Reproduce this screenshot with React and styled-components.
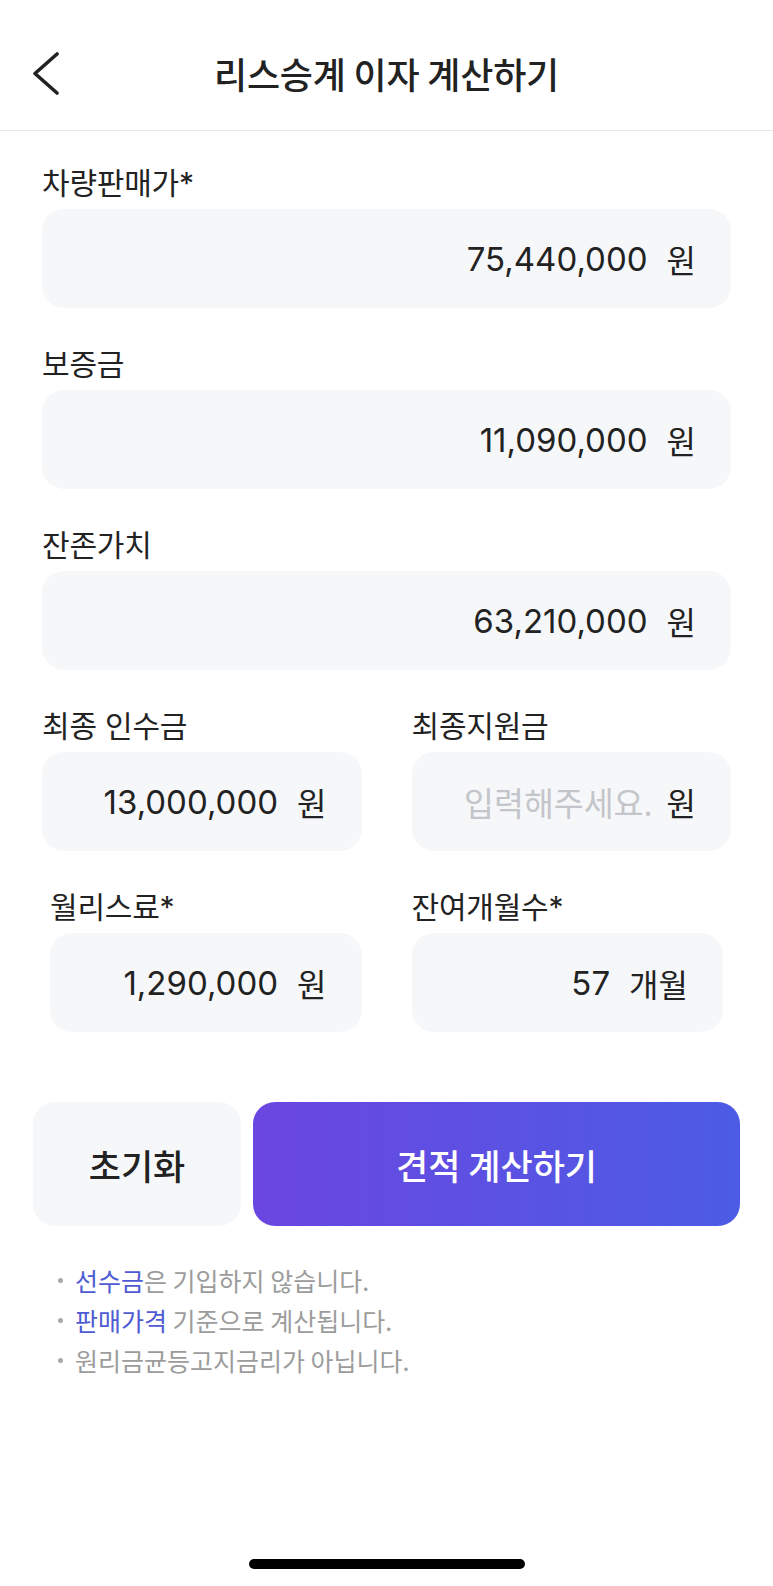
import React from "react";
import styled, { createGlobalStyle } from "styled-components";

const Global = createGlobalStyle`
  html, body { margin: 0; padding: 0; background: #fff; }
  body {
    font-family: Inter, "Noto Sans CJK KR", sans-serif;
    color: #222;
    -webkit-font-smoothing: antialiased;
  }
  * { box-sizing: border-box; }
`;

const Page = styled.div`
  width: 773px;
  min-height: 1586px;
  display: flex;
  flex-direction: column;
  background: #fff;
`;

const Header = styled.header`
  height: 131px;
  padding-top: 16px;
  display: grid;
  grid-template-columns: 1fr auto 1fr;
  align-items: center;
  border-bottom: 1px solid #e6e6e6;
`;

const BackButton = styled.button`
  justify-self: start;
  margin-left: 32px;
  padding: 0;
  border: 0;
  background: none;
  width: 28px;
  height: 43px;
  display: flex;
  cursor: pointer;
`;

const Title = styled.h1`
  margin: 0;
  font-family: "Noto Sans CJK KR", sans-serif;
  font-size: 36px;
  font-weight: 500;
  letter-spacing: -0.2px;
  color: #222;
`;

const Form = styled.div`
  padding: 34px 42px 0;
  display: flex;
  flex-direction: column;
  gap: 38px;
`;

const Row = styled.div`
  display: grid;
  grid-template-columns: 1fr 1fr;
  column-gap: 50px;
`;

const Field = styled.div`
  display: flex;
  flex-direction: column;
  gap: 8px;
  padding-left: ${(p) => (p.$inset === "left" ? "8px" : "0")};
  padding-right: ${(p) => (p.$inset === "right" ? "8px" : "0")};
`;

const Label = styled.label`
  font-family: Inter, "Noto Sans CJK KR", sans-serif;
  font-size: 30px;
  line-height: 36px;
  font-weight: 400;
  color: #222;
  letter-spacing: -0.2px;
`;

const Box = styled.div`
  height: 99px;
  border-radius: 22px;
  background: #f6f7f9;
  display: flex;
  align-items: center;
  justify-content: flex-end;
  padding-right: 35px;
  gap: 19px;
`;

const Value = styled.span`
  font-family: Inter, "Noto Sans CJK KR", sans-serif;
  font-size: 33px;
  font-weight: 400;
  color: #222;
`;

const Placeholder = styled.span`
  font-family: "Noto Sans CJK KR", sans-serif;
  font-size: 32.5px;
  color: #c3c5ca;
  margin-right: -5px;
`;

const Unit = styled.span`
  font-family: "Noto Sans CJK KR", sans-serif;
  font-size: 32px;
  color: #222;
`;

const Actions = styled.div`
  margin-top: 70px;
  padding: 0 33px;
  display: flex;
  gap: 12px;
`;

const Button = styled.button`
  height: 124px;
  border: 0;
  border-radius: 22px;
  font-family: "Noto Sans CJK KR", sans-serif;
  font-size: 35px;
  font-weight: 500;
  cursor: pointer;
  width: ${(p) => (p.$primary ? "auto" : "208px")};
  flex: ${(p) => (p.$primary ? "1" : "none")};
  color: ${(p) => (p.$primary ? "#fff" : "#222")};
  background: ${(p) =>
    p.$primary ? "linear-gradient(90deg, #6b46e1 0%, #4c5ce4 100%)" : "#f6f7f9"};
`;

const Notes = styled.ul`
  list-style: none;
  margin: 34px 0 0;
  padding: 0 0 0 58px;
`;

const Note = styled.li`
  display: flex;
  align-items: center;
  height: 40px;
  font-family: "Noto Sans CJK KR", sans-serif;
  font-size: 25px;
  color: #9c9c9c;
  &::before {
    content: "";
    width: 5px;
    height: 5px;
    border-radius: 50%;
    background: #a9a9a9;
    margin-right: 12px;
    flex: none;
  }
`;

const Em = styled.span`
  color: #4f5bd2;
`;

const Spacer = styled.div`
  flex: 1;
`;

const HomeIndicator = styled.div`
  align-self: center;
  width: 276px;
  height: 10px;
  border-radius: 5px;
  background: #000;
  margin-bottom: 17px;
`;

function InputField({ label, value, unit, placeholder, inset }) {
  return (
    <Field $inset={inset}>
      <Label>{label}</Label>
      <Box>
        {value ? <Value>{value}</Value> : <Placeholder>{placeholder}</Placeholder>}
        <Unit>{unit}</Unit>
      </Box>
    </Field>
  );
}

export default function App() {
  return (
    <>
      <Global />
      <Page>
        <Header>
          <BackButton aria-label="뒤로">
            <svg width="28" height="43" viewBox="0 0 28 43" fill="none">
              <polyline
                points="25,2 3,21.5 25,41"
                stroke="#222"
                strokeWidth="3.6"
                strokeLinecap="round"
                strokeLinejoin="round"
              />
            </svg>
          </BackButton>
          <Title>리스승계 이자 계산하기</Title>
          <span />
        </Header>

        <Form>
          <InputField label="차량판매가*" value="75,440,000" unit="원" />
          <InputField label="보증금" value="11,090,000" unit="원" />
          <InputField label="잔존가치" value="63,210,000" unit="원" />
          <Row>
            <InputField label="최종 인수금" value="13,000,000" unit="원" />
            <InputField label="최종지원금" placeholder="입력해주세요." unit="원" />
          </Row>
          <Row>
            <InputField label="월리스료*" value="1,290,000" unit="원" inset="left" />
            <InputField label="잔여개월수*" value="57" unit="개월" inset="right" />
          </Row>
        </Form>

        <Actions>
          <Button>초기화</Button>
          <Button $primary>견적 계산하기</Button>
        </Actions>

        <Notes>
          <Note>
            <Em>선수금</Em>은 기입하지 않습니다.
          </Note>
          <Note>
            <Em>판매가격</Em>&nbsp;기준으로 계산됩니다.
          </Note>
          <Note>원리금균등고지금리가 아닙니다.</Note>
        </Notes>

        <Spacer />
        <HomeIndicator />
      </Page>
    </>
  );
}
